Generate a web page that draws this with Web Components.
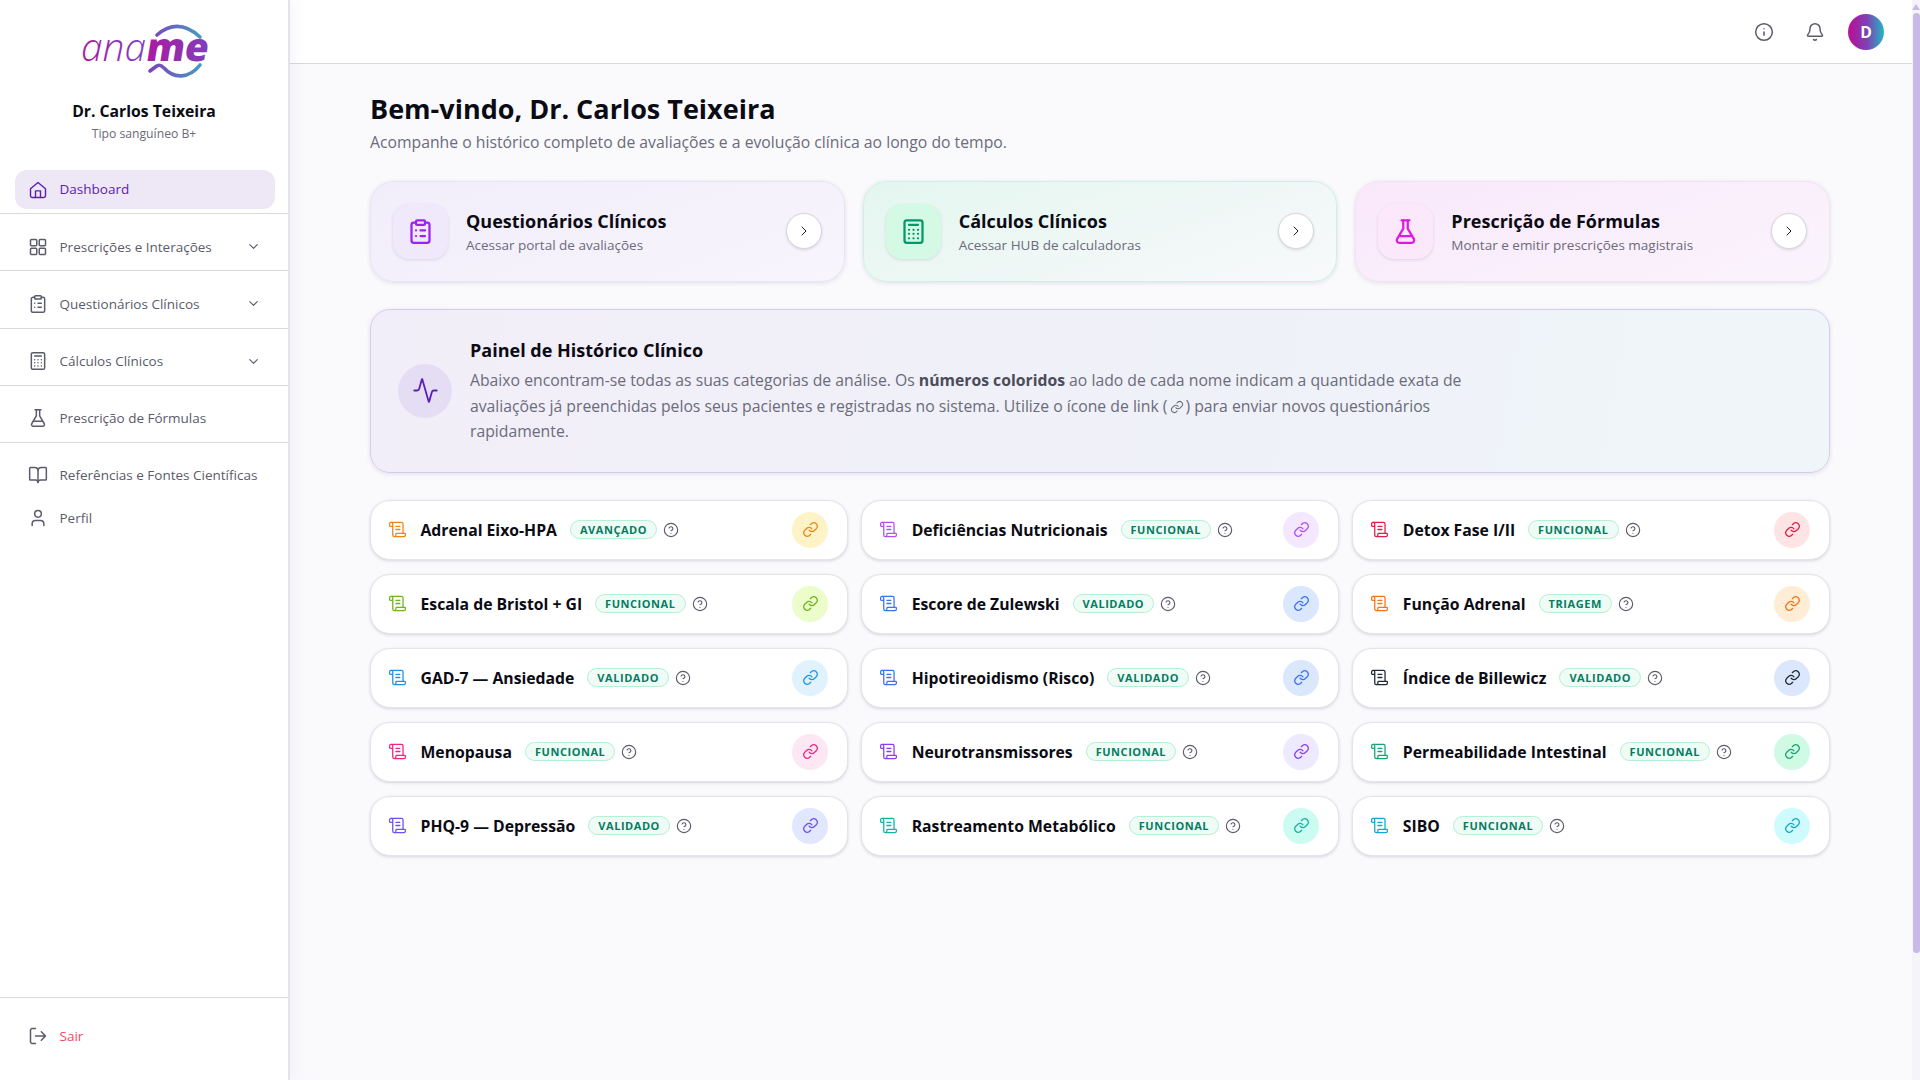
<!DOCTYPE html>
<html lang="pt-BR"><head><meta charset="utf-8"><title>Aname</title>
<style>
html,body{margin:0;height:100%;background:#fafafd;font-family:"Open Sans",sans-serif;overflow:hidden}
</style></head><body>
<app-shell></app-shell>
<script>
const I={
home:'<path d="M3 10.5 12 3l9 7.5V19a2 2 0 0 1-2 2H5a2 2 0 0 1-2-2z"/><path d="M9 21v-8h6v8"/>',
grid:'<rect x="3" y="3" width="7.5" height="7.5" rx="1.2"/><rect x="13.5" y="3" width="7.5" height="7.5" rx="1.2"/><rect x="3" y="13.5" width="7.5" height="7.5" rx="1.2"/><rect x="13.5" y="13.5" width="7.5" height="7.5" rx="1.2"/>',
clip:'<rect x="8" y="2" width="8" height="4" rx="1"/><path d="M16 4h2a2 2 0 0 1 2 2v14a2 2 0 0 1-2 2H6a2 2 0 0 1-2-2V6a2 2 0 0 1 2-2h2"/><path d="M12 11h4M12 16h4M8 11h.01M8 16h.01"/>',
calc:'<rect x="4" y="2" width="16" height="20" rx="2"/><path d="M8 6h8M8 10.5h.01M12 10.5h.01M16 10.5h.01M8 14h.01M12 14h.01M16 14h.01M8 18h.01M12 18h.01M16 18h.01"/>',
flask:'<path d="M10 2v7.5L4.6 18.6A2.2 2.2 0 0 0 6.5 22h11a2.2 2.2 0 0 0 1.9-3.4L14 9.5V2"/><path d="M8.5 2h7M7 16h10"/>',
book:'<path d="M12 7v14"/><path d="M3 18a1 1 0 0 1-1-1V4a1 1 0 0 1 1-1h5a4 4 0 0 1 4 4 4 4 0 0 1 4-4h5a1 1 0 0 1 1 1v13a1 1 0 0 1-1 1h-6a3 3 0 0 0-3 3 3 3 0 0 0-3-3z"/>',
user:'<path d="M19 21v-2a4 4 0 0 0-4-4H9a4 4 0 0 0-4 4v2"/><circle cx="12" cy="7" r="4"/>',
down:'<path d="m6 9 6 6 6-6"/>',
right:'<path d="m9 18 6-6-6-6"/>',
logout:'<path d="M9 21H5a2 2 0 0 1-2-2V5a2 2 0 0 1 2-2h4"/><path d="m16 17 5-5-5-5M21 12H9"/>',
info:'<circle cx="12" cy="12" r="10"/><path d="M12 16v-4M12 8h.01"/>',
bell:'<path d="M10.3 21a2 2 0 0 0 3.4 0"/><path d="M3.3 15.3A1 1 0 0 0 4 17h16a1 1 0 0 0 .7-1.7C19.4 14 18 12.5 18 8A6 6 0 0 0 6 8c0 4.5-1.4 6-2.7 7.3"/>',
pulse:'<path d="M22 12h-2.5a2 2 0 0 0-1.9 1.5l-2.3 8.3a.25.25 0 0 1-.5 0L9.2 2.2a.25.25 0 0 0-.5 0l-2.3 8.3A2 2 0 0 1 4.5 12H2"/>',
link:'<path d="M10 13a5 5 0 0 0 7.500.5l3-3a5 5 0 0 0-7-7l-1.700 1.700"/><path d="M14 11a5 5 0 0 0-7.500-.5l-3 3a5 5 0 0 0 7 7l1.700-1.700"/>',
help:'<circle cx="12" cy="12" r="10"/><path d="M9.100 9a3 3 0 0 1 5.800 1c0 2-3 3-3 3M12 17h.01"/>',
scroll:'<path d="M15 12h-5M15 8h-5"/><path d="M19 17V5a2 2 0 0 0-2-2H4"/><path d="M8 21h12a2 2 0 0 0 2-2v-1a1 1 0 0 0-1-1H11a1 1 0 0 0-1 1v1a2 2 0 1 1-4 0V5a2 2 0 1 0-4 0v2a1 1 0 0 0 1 1h3"/>'
};
const svg=(n,s,c,w=2)=>`<svg xmlns="http://www.w3.org/2000/svg" width="${s}" height="${s}" viewBox="0 0 24 24" fill="none" stroke="${c}" stroke-width="${w}" stroke-linecap="round" stroke-linejoin="round" style="display:block;flex:none">${I[n]}</svg>`;

class AppLogo extends HTMLElement{constructor(){super();this.attachShadow({mode:'open'}).innerHTML=`<style>:host{display:block;width:130px;height:56px}svg{display:block;overflow:visible}
text{font-family:"Open Sans",sans-serif}</style>
<svg width="130" height="56" viewBox="0 0 130 56"><defs>
<linearGradient id="g" x1="2" x2="129" y1="0" y2="0" gradientUnits="userSpaceOnUse"><stop offset="0" stop-color="#a91ba3"/><stop offset=".55" stop-color="#7a45bd"/><stop offset="1" stop-color="#3ea6c2"/></linearGradient></defs>
<text x="2" y="39" font-size="39" font-style="italic" font-weight="300" fill="url(#g)" textLength="65" lengthAdjust="spacingAndGlyphs">ana</text>
<text x="0" y="0" transform="translate(66 39) skewX(-9)" font-size="39" font-weight="800" fill="url(#g)" textLength="62" lengthAdjust="spacingAndGlyphs">me</text>
<path d="M78 13Q99-5 121 15" fill="none" stroke="url(#g)" stroke-width="3.600" stroke-linecap="round"/>
<path d="M71 49 77 44.500C80 42 82 43 85 46 95 57 110 57 121 43" fill="none" stroke="url(#g)" stroke-width="3.600" stroke-linecap="round"/></svg>`}}
customElements.define('app-logo',AppLogo);

class NavItem extends HTMLElement{connectedCallback(){
 const a=this.hasAttribute('active'),ic=this.getAttribute('icon'),ch=this.hasAttribute('chevron'),red=this.hasAttribute('red');
 const c=a?'#5b21b6':'#5b5b6b';
 this.attachShadow({mode:'open'}).innerHTML=`<style>:host{display:block}
 .i{display:flex;align-items:center;gap:11.500px;height:${a?39:42}px;padding:0 14px 0 13px;margin:0 13px 0 15px;border-radius:12px;font-size:13.5px;color:${red?'#f44a5e':c};background:${a?'#eee8f6':'transparent'}}
 .l{flex:1;white-space:nowrap;${a?'margin-top:-2px;':''}}</style>
 <div class="i">${svg(ic,20,c,a?1.7:1.8)}<span class="l"><slot></slot></span>${ch?svg('down',15,c,1.8):''}</div>`}}
customElements.define('nav-item',NavItem);

class AppSidebar extends HTMLElement{constructor(){super();this.attachShadow({mode:'open'}).innerHTML=`<style>
:host{display:flex;flex-direction:column;width:288px;flex:none;height:1080px;background:#fff;border-right:2px solid #e4e3ea;box-sizing:content-box;position:relative;z-index:1;box-shadow:3px 0 14px rgba(110,80,190,.07)}
.top{display:flex;flex-direction:column;align-items:center;padding-top:22px}
.n{margin-top:22px;font-size:15.75px;font-weight:700;color:#0b0b14;line-height:22px}
.t{margin-top:3px;font-size:12.2px;color:#6b6b7a;line-height:18px}
nav{margin-top:27px;flex:1}
.s{border-bottom:1px solid #d8d8de;padding:11.500px 0 2.800px}
.s.first{padding:0 0 4px}
.p{padding-top:11px;display:flex;flex-direction:column;gap:1px}
.foot{border-top:1px solid #d8d8de;height:75px;margin-bottom:7px;display:flex;align-items:center}
.foot nav-item{width:100%}
</style>
<div class="top"><app-logo></app-logo><div class="n">Dr. Carlos Teixeira</div><div class="t">Tipo sanguíneo B+</div></div>
<nav>
<div class="s first"><nav-item icon="home" active>Dashboard</nav-item></div>
<div class="s"><nav-item icon="grid" chevron>Prescrições e Interações</nav-item></div>
<div class="s"><nav-item icon="clip" chevron>Questionários Clínicos</nav-item></div>
<div class="s"><nav-item icon="calc" chevron>Cálculos Clínicos</nav-item></div>
<div class="s"><nav-item icon="flask">Prescrição de Fórmulas</nav-item></div>
<div class="p"><nav-item icon="book">Referências e Fontes Científicas</nav-item><nav-item icon="user">Perfil</nav-item></div>
</nav>
<div class="foot"><nav-item icon="logout" red>Sair</nav-item></div>`}}
customElements.define('app-sidebar',AppSidebar);

class AppTopbar extends HTMLElement{constructor(){super();this.attachShadow({mode:'open'}).innerHTML=`<style>
:host{display:flex;align-items:center;justify-content:flex-end;height:63px;flex:none;background:#fff;border-bottom:1px solid #d8d8de;padding-right:28px}
.a{width:36px;height:36px;margin-left:23px;border-radius:50%;background:linear-gradient(90deg,#b0169c 10%,#7a45b5 55%,#22b8c4);color:#fff;font-size:15.75px;font-weight:700;display:flex;align-items:center;justify-content:center}
.b{margin-left:31px}
</style>${svg('info',20,'#5b5b6b',1.8)}<span class="b">${svg('bell',20,'#5b5b6b',1.8)}</span><div class="a">D</div>`}}
customElements.define('app-topbar',AppTopbar);

class QuickCard extends HTMLElement{connectedCallback(){
 const bg=this.getAttribute('bg'),ib=this.getAttribute('ib'),ic=this.getAttribute('ic'),co=this.getAttribute('co'),bd=this.getAttribute('bd');
 this.attachShadow({mode:'open'}).innerHTML=`<style>
 :host{display:flex;align-items:center;height:101px;box-sizing:border-box;border:1px solid ${bd};border-radius:24px;background:${bg};box-shadow:0 1px 4px rgba(60,50,90,.14);padding:0 22px 0 22px}
 .ib{width:55px;height:55px;border-radius:16px;background:${ib};box-shadow:0 1px 3px rgba(60,50,90,.14);display:flex;align-items:center;justify-content:center;flex:none}
 .tx{flex:1;margin-left:18px;min-width:0;padding-top:1px}
 .h{font-size:18px;font-weight:700;color:#0b0b14;line-height:24px;margin-bottom:2px}
 .d{font-size:13.5px;color:#6b6b7a;line-height:20px}
 .b{width:36px;height:36px;border-radius:50%;background:#fff;border:1px solid #d6d6dc;box-sizing:border-box;box-shadow:0 1px 3px rgba(0,0,0,.12);display:flex;align-items:center;justify-content:center;flex:none}
 </style><div class="ib">${svg(ic,27,co,2)}</div><div class="tx"><div class="h"><slot name="h"></slot></div><div class="d"><slot name="d"></slot></div></div><div class="b">${svg('right',16,'#1a1a24',1.5)}</div>`}}
customElements.define('quick-card',QuickCard);

class InfoPanel extends HTMLElement{constructor(){super();this.attachShadow({mode:'open'}).innerHTML=`<style>
:host{display:flex;align-items:center;height:164px;box-sizing:border-box;border:1px solid #d6cdee;border-radius:20px;background:linear-gradient(100deg,#f2eef9,#eff1f8 60%,#eff6f9);box-shadow:0 1px 4px rgba(60,50,90,.14);padding:0 27px}
.c{width:54px;height:54px;border-radius:50%;background:#e5ddf4;display:flex;align-items:center;justify-content:center;flex:none}
.x{margin-left:18px;width:1010px;padding-top:2px}
.h{font-size:18px;font-weight:700;color:#0b0b14;line-height:24px;margin-bottom:6px}
.p{font-size:15.75px;line-height:25.700px;color:#6b6b7a}
b{color:#4b4b5a;font-weight:700}
.ln{display:inline-block;vertical-align:-2px;line-height:0;margin:0 2px}
</style><div class="c">${svg('pulse',27,'#5b21b6',1.6)}</div><div class="x"><div class="h">Painel de Histórico Clínico</div><div class="p">Abaixo encontram-se todas as suas categorias de análise. Os <b>números coloridos</b> ao lado de cada nome indicam a quantidade exata de avaliações já preenchidas pelos seus pacientes e registradas no sistema. Utilize o ícone de link (<span class="ln">${svg('link',14,'#6b6b7a',1.8)}</span>) para enviar novos questionários rapidamente.</div></div>`}}
customElements.define('info-panel',InfoPanel);

class CatRow extends HTMLElement{connectedCallback(){
 const c=this.getAttribute('c'),b=this.getAttribute('b'),t=this.getAttribute('tag');
 this.attachShadow({mode:'open'}).innerHTML=`<style>
 :host{display:flex;align-items:center;height:60.500px;box-sizing:border-box;border:1px solid #e4e4ea;border-radius:20px;background:#fff;box-shadow:0 1px 3px rgba(30,30,60,.17);padding:0 18.500px 0 17px}
 .n{margin-left:13.500px;font-size:15.75px;font-weight:700;color:#0b0b14;white-space:nowrap}
 .t{margin-left:13px;height:17px;padding:0 9px;border-radius:10px;border:1px solid #b5efd6;background:#effcf6;color:#047c62;font-size:11px;font-weight:700;letter-spacing:.55px;display:flex;align-items:center;white-space:nowrap}
 .q{margin-left:6px}
 .sp{flex:1}
 .l{width:36px;height:36px;border-radius:50%;background:${b};display:flex;align-items:center;justify-content:center}
 </style>${svg('scroll',19,c,1.6)}<span class="n"><slot></slot></span><span class="t">${t}</span><span class="q">${svg('help',16,'#5b5b6b',1.7)}</span><span class="sp"></span><span class="l">${svg('link',17,c,1.8)}</span>`}}
customElements.define('cat-row',CatRow);

const rows=[
['Adrenal Eixo-HPA','AVANÇADO','#f0860f','#fef3c7'],['Deficiências Nutricionais','FUNCIONAL','#b14ff5','#f3e8ff'],['Detox Fase I/II','FUNCIONAL','#e11d48','#ffe4e6'],
['Escala de Bristol + GI','FUNCIONAL','#6cb51a','#ecfccb'],['Escore de Zulewski','VALIDADO','#3b72f0','#dbe7fd'],['Função Adrenal','TRIAGEM','#f97316','#ffedd5'],
['GAD-7 — Ansiedade','VALIDADO','#1e93e6','#e0f2fe'],['Hipotireoidismo (Risco)','VALIDADO','#3b72f0','#dbe7fd'],['Índice de Billewicz','VALIDADO','#1f2937','#dbe7fd'],
['Menopausa','FUNCIONAL','#ec2586','#fce7f3'],['Neurotransmissores','FUNCIONAL','#8b3ef0','#ede9fe'],['Permeabilidade Intestinal','FUNCIONAL','#14a571','#d1fae5'],
['PHQ-9 — Depressão','VALIDADO','#6d4ff5','#e0e7ff'],['Rastreamento Metabólico','FUNCIONAL','#14b3a0','#ccfbf1'],['SIBO','FUNCIONAL','#10a9cf','#cffafe']];

class AppMain extends HTMLElement{constructor(){super();this.attachShadow({mode:'open'}).innerHTML=`<style>
:host{display:block;flex:1;padding:26px 82px 0 80px;min-height:0}
h1{margin:0;font-size:27px;font-weight:700;line-height:38px;color:#0b0b14}
.sub{font-size:15.75px;color:#6b6b7a;line-height:24px;margin-top:2px}
.q{display:grid;grid-template-columns:repeat(3,1fr);gap:18px;margin-top:26.500px}
info-panel{margin-top:27px}
.g{display:grid;grid-template-columns:repeat(3,1fr);gap:13.500px;margin-top:27px}
</style><h1>Bem-vindo, Dr. Carlos Teixeira</h1><div class="sub">Acompanhe o histórico completo de avaliações e a evolução clínica ao longo do tempo.</div>
<div class="q">
<quick-card ic="clip" co="#9b22f5" ib="#f0e9fc" bd="#e9e4f5" bg="linear-gradient(160deg,#f1edfa,#f8f5fd)"><span slot="h">Questionários Clínicos</span><span slot="d">Acessar portal de avaliações</span></quick-card>
<quick-card ic="calc" co="#059669" ib="#d4fae6" bd="#cdf2e2" bg="linear-gradient(160deg,#e4f6ef,#f8f9fb)"><span slot="h">Cálculos Clínicos</span><span slot="d">Acessar HUB de calculadoras</span></quick-card>
<quick-card ic="flask" co="#dd1ae0" ib="#fbe9fb" bd="#f3e2f4" bg="linear-gradient(160deg,#f9e8fb,#faf4fc)"><span slot="h">Prescrição de Fórmulas</span><span slot="d">Montar e emitir prescrições magistrais</span></quick-card>
</div><info-panel></info-panel>
<div class="g">${rows.map(r=>`<cat-row tag="${r[1]}" c="${r[2]}" b="${r[3]}">${r[0]}</cat-row>`).join('')}</div>`}}
customElements.define('app-main',AppMain);

class AppShell extends HTMLElement{constructor(){super();this.attachShadow({mode:'open'}).innerHTML=`<style>
:host{display:flex;width:1920px;height:1080px;overflow:hidden}
.sb{width:8px;flex:none;background:#f5f4fa;display:flex;flex-direction:column;align-items:center}
.th{width:7px;height:940px;margin-top:13px;background:#c9b8e8;border-radius:4px}
.ar{width:0;height:0;border:4px solid transparent;border-top:0;border-bottom:6px solid #c9b8e8;margin-top:4px;position:absolute}
.col{flex:1;display:flex;flex-direction:column;min-width:0}
</style><app-sidebar></app-sidebar><div class="col"><app-topbar></app-topbar><app-main></app-main></div><div class="sb"><span class="ar"></span><div class="th"></div></div>`}}
customElements.define('app-shell',AppShell);
</script></body></html>
